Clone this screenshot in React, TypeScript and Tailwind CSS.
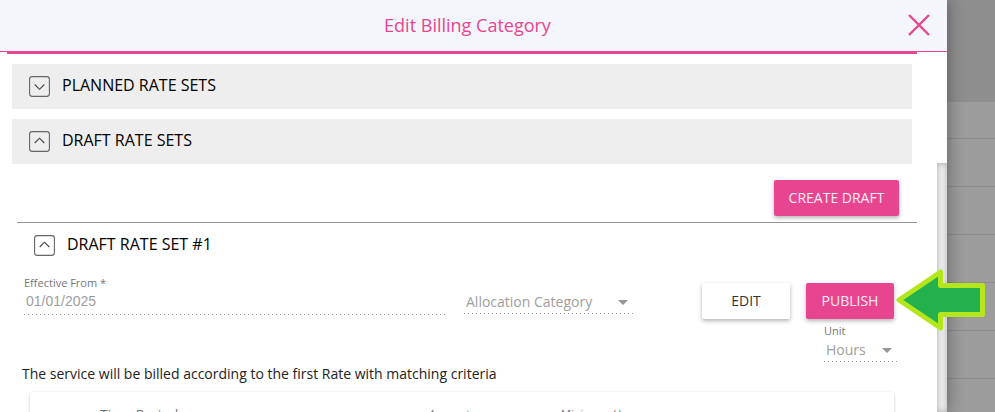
import { useState } from "react";

type ToggleHeadingProps = {
  title: string;
  open: boolean;
  onToggle: () => void;
  shaded?: boolean;
};

function ToggleHeading({ title, open, onToggle, shaded }: ToggleHeadingProps) {
  return (
    <h2 className={shaded ? "bg-[#eeeeee]" : ""}>
      <button
        type="button"
        aria-expanded={open}
        onClick={onToggle}
        className="w-full h-[45px] pl-[17px] pb-0.5 flex items-center gap-3 text-left text-base text-black"
      >
        <svg width="21" height="21" viewBox="0 0 21 21" fill="none" className="mt-px">
          <rect x="0.6" y="0.6" width="19.8" height="19.8" rx="2.6" stroke="#666" strokeWidth="1.1" />
          <path d={open ? "M5.7 12L10.5 7.2L15.3 12" : "M5.7 8.5L10.5 13.3L15.3 8.5"} stroke="#444" strokeWidth="1.1" />
        </svg>
        <span className="pb-0.5">{title}</span>
      </button>
    </h2>
  );
}

function Caret() {
  return (
    <svg width="10" height="5" viewBox="0 0 10 5" className="absolute right-[5px] bottom-[9px] pointer-events-none">
      <path d="M0 0H10L5 5Z" fill="#949494" />
    </svg>
  );
}

function DottedLine() {
  return <div className="h-px shrink-0 bg-[repeating-linear-gradient(to_right,#949494_0_1px,transparent_1px_4px)]" />;
}

const buttonBase = "h-9 rounded-xs text-sm shadow-[0_2px_4px_rgba(0,0,0,0.3)]";

export default function App() {
  const [plannedOpen, setPlannedOpen] = useState(false);
  const [draftsOpen, setDraftsOpen] = useState(true);
  const [draftOpen, setDraftOpen] = useState(true);

  return (
    <div className="h-screen overflow-hidden flex bg-[#9c9c9c] font-['Open_Sans','Noto_Sans',sans-serif]">
      <div role="dialog" aria-labelledby="dialog-title" className="relative z-10 flex-1 min-w-0 flex flex-col bg-white shadow-[0_0_16px_rgba(0,0,0,0.4)]">
        <header className="shrink-0 h-[52px] bg-[#f4f6fb] border-b border-[#e84590] grid grid-cols-[1fr_auto_1fr] items-center pl-1 pr-4 pb-0.5">
          <h1 id="dialog-title" className="col-start-2 text-lg text-[#e84590]">Edit Billing Category</h1>
          <button type="button" aria-label="Close" className="justify-self-end">
            <svg width="24" height="24" viewBox="0 0 24 24" fill="none" stroke="#e84590" strokeWidth="2.4">
              <path d="M2 2L22 22M22 2L2 22" />
            </svg>
          </button>
        </header>

        <div className="flex-1 min-h-0 flex">
          <main className="flex-1 min-w-0 overflow-hidden pl-[7px] pr-5">
            <div className="h-0.5 bg-[#e84590]" />
            <div className="px-[5px] pt-2.5 flex flex-col gap-2.5">
              <ToggleHeading title="PLANNED RATE SETS" open={plannedOpen} onToggle={() => setPlannedOpen(!plannedOpen)} shaded />
              <ToggleHeading title="DRAFT RATE SETS" open={draftsOpen} onToggle={() => setDraftsOpen(!draftsOpen)} shaded />
            </div>

            {draftsOpen && (
              <section className="pl-2.5">
                <div className="pt-4 pb-1.5 pr-[18px] flex justify-end">
                  <button type="button" className={`${buttonBase} w-[125px] bg-[#e84590] font-medium text-white/90`}>CREATE DRAFT</button>
                </div>
                <div className="border-t border-[#949494]">
                  <ToggleHeading title="DRAFT RATE SET #1" open={draftOpen} onToggle={() => setDraftOpen(!draftOpen)} />
                </div>

                {draftOpen && (
                  <div>
                    <div className="pl-[7px] pr-[23px] pt-[7px] flex items-start">
                      <div className="flex-1 min-w-0 h-10 flex flex-col">
                        <label htmlFor="effective-from" className="text-[11px] leading-4 text-[#757575]">Effective From *</label>
                        <input
                          id="effective-from"
                          defaultValue="01/01/2025"
                          className="w-full flex-1 min-h-0 pl-0.5 pb-1 text-sm text-[#9e9e9e] font-['Liberation_Sans',Arial,sans-serif] outline-none"
                        />
                        <DottedLine />
                      </div>
                      <div className="relative ml-[19px] w-[169px] h-[39px] flex flex-col justify-end">
                        <select aria-label="Allocation Category" className="appearance-none w-full h-[22px] pl-0.5 text-sm text-[#9e9e9e] outline-none">
                          <option>Allocation Category</option>
                        </select>
                        <Caret />
                        <DottedLine />
                      </div>
                      <div className="ml-[69px] mt-2 flex gap-4">
                        <button type="button" className={`${buttonBase} w-[88px] bg-white text-[#333]`}>EDIT</button>
                        <button type="button" className={`${buttonBase} w-[88px] bg-[#e84590] font-medium text-white/90`}>PUBLISH</button>
                      </div>
                    </div>

                    <div className="pr-5 flex justify-end">
                      <div className="relative w-[73px] pt-1 flex flex-col">
                        <label htmlFor="unit" className="text-[11px] leading-4 text-[#757575]">Unit</label>
                        <select id="unit" className="appearance-none w-full h-[22px] pl-0.5 text-sm text-[#9e9e9e] outline-none">
                          <option>Hours</option>
                        </select>
                        <Caret />
                        <DottedLine />
                      </div>
                    </div>

                    <p className="pl-[5px] pt-0.5 text-sm leading-5 text-[#222]">
                      The service will be billed according to the first Rate with matching criteria
                    </p>

                    <div className="mt-2 ml-[13px] mr-[23px] h-16 rounded-xs shadow-[0_1px_3px_rgba(0,0,0,0.25)]">
                      <table className="w-full table-fixed leading-5 text-[#757575]">
                        <thead>
                          <tr className="align-top text-left text-[11px]">
                            <th className="pl-[70px] pt-[13px] font-normal w-[399px] text-sm leading-5">Time Period</th>
                            <th className="pt-3 font-normal w-[132px] leading-5">Amount</th>
                            <th className="pt-3 font-normal leading-5">Minimum Hours</th>
                          </tr>
                        </thead>
                      </table>
                    </div>
                  </div>
                )}
              </section>
            )}
          </main>
          <div className="w-2.5 pt-[111px] flex">
            <div className="flex-1 bg-[#f0f0f0] shadow-[inset_0_0_6px_rgba(0,0,0,0.3)]" />
          </div>
        </div>

        {/* callout pointing at the publish button */}
        <svg width="91" height="64" viewBox="0 0 91 64" className="absolute top-[268px] -right-[39px] pointer-events-none">
          <path d="M4 32L45.5 4V17.5H87.5V46.5H45.5V60Z" fill="#22b14c" stroke="#b5e61d" strokeWidth="5" strokeLinejoin="round" />
        </svg>
      </div>

      <aside className="w-12 shrink-0" aria-hidden="true">
        <div className="h-[102px] bg-[#8e8e8e]" />
        <div className="h-[37px] border-b border-[#8c8c8c]" />
        <div className="h-12 border-b border-[#8c8c8c]" />
        <div className="h-12 border-b border-[#8c8c8c]" />
        <div className="h-12 border-b border-[#8c8c8c]" />
        <div className="h-12 border-b border-[#8c8c8c]" />
        <div className="h-12 border-b border-[#8c8c8c]" />
      </aside>
    </div>
  );
}
